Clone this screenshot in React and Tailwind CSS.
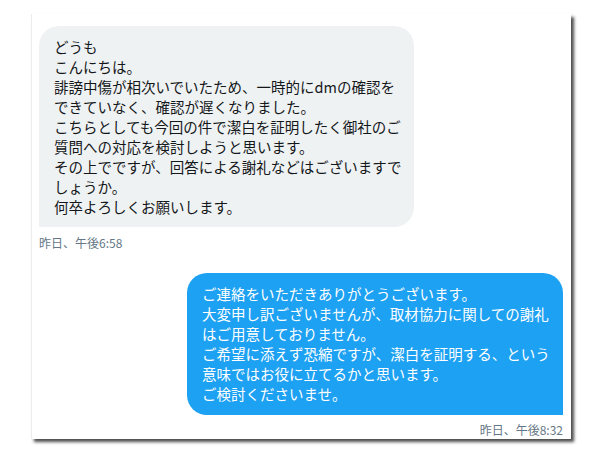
import React from "react";

const received = [
  "どうも",
  "こんにちは。",
  "誹謗中傷が相次いでいたため、一時的にdmの確認を",
  "できていなく、確認が遅くなりました。",
  "こちらとしても今回の件で潔白を証明したく御社のご",
  "質問への対応を検討しようと思います。",
  "その上でですが、回答による謝礼などはございますで",
  "しょうか。",
  "何卒よろしくお願いします。",
];

const sent = [
  "ご連絡をいただきありがとうございます。",
  "大変申し訳ございませんが、取材協力に関しての謝礼",
  "はご用意しておりません。",
  "ご希望に添えず恐縮ですが、潔白を証明する、という",
  "意味ではお役に立てるかと思います。",
  "ご検討くださいませ。",
];

const App = () => {
  return (
    <div
      className="w-[600px] h-[470px] bg-white pt-[14px] pl-[31px]"
      style={{ fontFamily: '"Noto Sans CJK JP", "Noto Sans", sans-serif' }}
    >
      <div className="w-[540px] h-[425px] bg-white border-l border-[#ececec] shadow-[3px_3px_3px_rgba(0,0,0,0.7)] flex flex-col px-[7px] pt-[12px]">
        <div className="self-start w-[375px] bg-[#eff2f3] rounded-[20px] rounded-bl-none px-[15px] pt-[11px] pb-[10px] text-[14.5px] leading-[20px] text-[#14171a] whitespace-nowrap">
          {received.map((line, i) => (
            <div key={i}>{line}</div>
          ))}
        </div>
        <div className="self-start mt-[8px] text-[12px] leading-[16px] text-[#657786]">
          昨日、午後6:58
        </div>

        <div className="self-end mt-[22px] mr-[1px] w-[376px] bg-[#1da1f2] rounded-[20px] rounded-br-none px-[15px] pt-[11px] pb-[11px] text-[14.5px] leading-[20px] text-white whitespace-nowrap">
          {sent.map((line, i) => (
            <div key={i}>{line}</div>
          ))}
        </div>
        <div className="self-end mr-[1px] mt-[7px] text-[12px] leading-[16px] text-[#657786]">
          昨日、午後8:32
        </div>
      </div>
    </div>
  );
};

export default App;
